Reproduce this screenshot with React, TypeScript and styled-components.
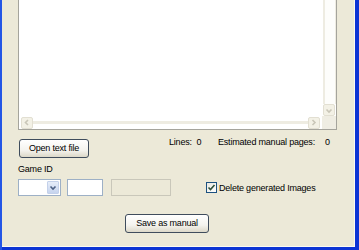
import React from 'react';
import styled, { createGlobalStyle } from 'styled-components';

const GlobalStyle = createGlobalStyle`
  html, body { margin: 0; padding: 0; background: #ece9d8; }
  body { font-family: "Liberation Sans", Arial, sans-serif; }
`;

const Window = styled.div`
  width: 359px;
  height: 250px;
  box-sizing: border-box;
  background: #0c34d4;
  border-left: 2px solid #2456e6;
  display: flex;
  overflow: hidden;
`;

const Client = styled.div`
  width: 353px;
  height: 247px;
  box-sizing: border-box;
  background: #ece9d8;
  border-right: 1px solid #fbfaf2;
  border-bottom: 1px solid #fbfaf2;
  padding: 0 0 0 16px;
  display: flex;
  flex-direction: column;
  font-size: 9px;
  letter-spacing: -0.2px;
  color: #000;
`;

const TextBox = styled.div`
  width: 319px;
  height: 130px;
  box-sizing: border-box;
  border: 1px solid #a5a49c;
  border-top: none;
  background: #fff;
  display: grid;
  grid-template-columns: 1fr 14px;
  grid-template-rows: 1fr 13px;
`;

const Content = styled.div`
  background: #fff;
`;

const VScroll = styled.div`
  display: flex;
  flex-direction: column;
  padding-left: 1px;
  background: #fff;
`;

const Track = styled.div<{ $vertical?: boolean }>`
  flex: 1;
  background: #fdfdfb;
  ${p => p.$vertical
    ? 'border-left: 2px solid #eeece2; border-right: 1px solid #eeece2;'
    : 'border-top: 2px solid #eeece2; border-bottom: 1px solid #eeece2;'}
`;

const Arrow = styled.div`
  width: 12px;
  height: 12px;
  box-sizing: border-box;
  background: #f3f1e6;
  border: 1px solid #e2dfd2;
  border-radius: 2px;
  display: flex;
  align-items: center;
  justify-content: center;
  flex: none;
`;

const HScroll = styled.div`
  display: flex;
  align-items: center;
  padding: 0 2px 0 2px;
  background: #fff;
`;

const Corner = styled.div`
  background: #efede3;
`;

const Row = styled.div<{ $mt: number }>`
  display: flex;
  align-items: flex-start;
  margin-top: ${p => p.$mt}px;
`;

const Button = styled.button<{ $w: number; $ml: number }>`
  width: ${p => p.$w}px;
  height: 19px;
  margin-left: ${p => p.$ml}px;
  box-sizing: border-box;
  padding: 0 0 1px;
  border: 1px solid #3f4c5c;
  border-radius: 3px;
  background: linear-gradient(#ffffff 0%, #f4f3ee 60%, #dcd8c8 100%);
  font-family: "Liberation Sans", Arial, sans-serif;
  font-size: 9px;
  letter-spacing: -0.2px;
  color: #000;
  flex: none;
`;

const Stat = styled.span<{ $w?: number }>`
  width: ${p => (p.$w ? `${p.$w}px` : 'auto')};
  margin-top: -2px;
  line-height: 11px;
  white-space: pre;
  flex: none;
`;

const Spacer = styled.span<{ $w: number }>`
  width: ${p => p.$w}px;
  flex: none;
`;

const Label = styled.div`
  margin-top: 6px;
  line-height: 11px;
`;

const Field = styled.div<{ $w: number; $disabled?: boolean; $ml?: number }>`
  width: ${p => p.$w}px;
  height: 17px;
  box-sizing: border-box;
  margin-left: ${p => p.$ml ?? 0}px;
  border: 1px solid ${p => (p.$disabled ? '#c9c7ba' : '#9db0c6')};
  background: ${p => (p.$disabled ? '#ece9d8' : '#fff')};
  display: flex;
  justify-content: flex-end;
  align-items: stretch;
  padding: 1px;
  flex: none;
`;

const DropButton = styled.div`
  width: 12px;
  border-radius: 1px;
  background: linear-gradient(#e6edf9, #c6d4ee);
  border: 1px solid #c4d1ea;
  box-sizing: border-box;
  display: flex;
  align-items: center;
  justify-content: center;
`;

const CheckWrap = styled.label`
  display: flex;
  align-items: center;
  margin-left: 35px;
  margin-top: 3px;
  gap: 2px;
  white-space: nowrap;
`;

const CheckBox = styled.span`
  width: 11px;
  height: 11px;
  box-sizing: border-box;
  border: 1px solid #1c5180;
  background: linear-gradient(135deg, #e8e8e0, #ffffff);
  display: flex;
  align-items: center;
  justify-content: center;
`;

const Chevron = ({ dir, color }: { dir: 'down' | 'left' | 'right'; color: string }) => {
  const d =
    dir === 'down' ? 'M1.5 2.5 L4 5 L6.5 2.5' : dir === 'left' ? 'M5 1 L2.5 3.5 L5 6' : 'M2.5 1 L5 3.5 L2.5 6';
  return (
    <svg width="8" height="7" viewBox="0 0 8 7">
      <path d={d} fill="none" stroke={color} strokeWidth="1.6" />
    </svg>
  );
};

export default function App() {
  return (
    <>
      <GlobalStyle />
      <Window>
        <Client>
          <TextBox>
            <Content />
            <VScroll>
              <Track $vertical />
              <Arrow>
                <Chevron dir="down" color="#c9c6b8" />
              </Arrow>
            </VScroll>
            <HScroll>
              <Arrow>
                <Chevron dir="left" color="#c9c6b8" />
              </Arrow>
              <Track />
              <Arrow>
                <Chevron dir="right" color="#c9c6b8" />
              </Arrow>
            </HScroll>
            <Corner />
          </TextBox>

          <Row $mt={9}>
            <Button $w={70} $ml={1}>Open text file</Button>
            <Spacer $w={80} />
            <Stat $w={49}>{'Lines:  0'}</Stat>
            <Stat $w={107}>Estimated manual pages:</Stat>
            <Stat>0</Stat>
          </Row>

          <Label>Game ID</Label>

          <Row $mt={4}>
            <Field $w={43}>
              <DropButton>
                <Chevron dir="down" color="#4d6185" />
              </DropButton>
            </Field>
            <Field $w={36} $ml={6} />
            <Field $w={60} $ml={8} $disabled />
            <CheckWrap>
              <CheckBox>
                <svg width="9" height="9" viewBox="0 0 9 9">
                  <path d="M1.5 4.5 L3.5 6.5 L7.5 2" fill="none" stroke="#2d4f3a" strokeWidth="1.6" />
                </svg>
              </CheckBox>
              Delete generated Images
            </CheckWrap>
          </Row>

          <Row $mt={18}>
            <Button $w={84} $ml={107}>Save as manual</Button>
          </Row>
        </Client>
      </Window>
    </>
  );
}
